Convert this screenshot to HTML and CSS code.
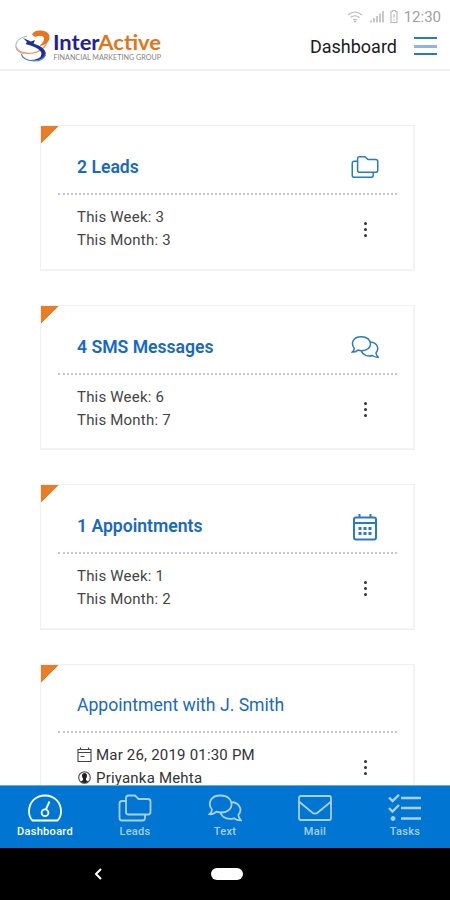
FILE: index.html
```
<!DOCTYPE html>
<html lang="en">
<head>
<meta charset="utf-8">
<title>Dashboard</title>
<link rel="stylesheet" href="styles.css">
</head>
<body>
<svg class="defs" aria-hidden="true">
  <symbol id="folders" viewBox="0 0 34 28">
    <path d="M8 7H4Q1.500 7 1.500 9.500V24Q1.500 26.500 4 26.500H24.500Q27 26.500 27 24V20.500M8 4Q8 1.500 10.500 1.500H17L20.500 5H30Q32.500 5 32.500 7.500V18Q32.500 20.500 30 20.500H10.500Q8 20.500 8 18Z"/>
  </symbol>
  <symbol id="chat" viewBox="0 0 34 28">
    <path d="M4 15.500C-.5 10 2 1.500 12.500 1.500C27 1.500 27.500 18.500 13 18.500Q10.500 18.500 8.500 17.700Q5 20.500 1.500 20.200Q4 18 4 15.500ZM23.500 8C31.500 8.500 35 16 30.300 21Q30.500 24 33 26.300Q29 26.500 26 24.300C20.500 26 14.500 24 12.500 19"/>
  </symbol>
</svg>
<div class="phone">
  <header class="top">
    <div class="status">
      <svg width="16" height="12" viewBox="0 0 16 12"><path d="M1 4Q8-2 15 4M3.500 6.500Q8 3 12.500 6.500M6 9Q8 7.500 10 9"/><circle cx="8" cy="10.500" r="1"/></svg>
      <svg class="signal" width="14" height="13" viewBox="0 0 14 13"><path d="M1 12.500v-2M4 12.500V8M7 12.500V6M10 12.500V3.500M13 12.500V1"/></svg>
      <svg class="battery" width="8" height="13" viewBox="0 0 8 13"><path d="M2.500 1.500V.5h3v1H7v11H1v-11ZM4 4v4M4 9.500v1"/></svg>
      <span class="clock">12:30</span>
    </div>
    <div class="bar">
      <svg class="logo" width="148" height="36" viewBox="0 0 148 36">
        <path d="M12 7C4 9 0 13 1 18Q2.500 23 9 24.500" stroke="#a8bfe0" stroke-width="1.200" fill="none"/>
        <path d="M1 18C3 25 18 27 27 20Q31 17 32 12" stroke="#ef9a6c" stroke-width="1.400" fill="none"/>
        <path d="M17 5.500Q19 1 26 1.500Q35 2 34.500 9Q34 15 24 17.500Q31 11 28.500 8Q26 5.500 20 8Z" fill="#e8741c"/>
        <path d="M8 9L16 12.500L20 11L18.500 14.500Q24 16.500 27 18.500Q34 24 28 29Q22 33 14 31Q26 31 26.500 25Q26 20 17 17L10.500 15L12 13Z" fill="#1d2f9c"/>
        <path d="M6.500 25Q7 31 19 32Q28 32 30.500 26" stroke="#4b83c4" stroke-width="1.200" fill="none"/>
        <text x="38" y="20.500" class="brand" textLength="108" lengthAdjust="spacingAndGlyphs"><tspan fill="#20209a">Inter</tspan><tspan fill="#e37417">Active</tspan></text>
        <text x="38.500" y="30.500" class="tagline" textLength="107.500" lengthAdjust="spacingAndGlyphs">FINANCIAL MARKETING GROUP</text>
      </svg>
      <h1>Dashboard</h1>
      <div class="menu"><i></i><i></i><i></i></div>
    </div>
  </header>

  <main>
    <section class="card">
      <div class="head"><h2>2 Leads</h2><svg class="ic" width="28" height="24"><use href="#folders"/></svg></div>
      <div class="body"><div><p>This Week: 3</p><p>This Month: 3</p></div><div class="dots"><i></i><i></i><i></i></div></div>
    </section>
    <section class="card">
      <div class="head"><h2>4 SMS Messages</h2><svg class="ic" width="28" height="24"><use href="#chat"/></svg></div>
      <div class="body"><div><p>This Week: 6</p><p>This Month: 7</p></div><div class="dots"><i></i><i></i><i></i></div></div>
    </section>
    <section class="card">
      <div class="head"><h2>1 Appointments</h2>
        <svg class="ic cal" width="28" height="28" viewBox="0 0 28 28"><path d="M5 4.500h18q2 0 2 2V24.500q0 2-2 2H5q-2 0-2-2V6.500q0-2 2-2ZM3 10h22M8.500 4.500V1M19.500 4.500V1"/><path class="cells" d="M7.500 15.500h3M12.500 15.500h3M17.500 15.500h3M7.500 20.500h3M12.500 20.500h3M17.500 20.500h3"/></svg>
      </div>
      <div class="body"><div><p>This Week: 1</p><p>This Month: 2</p></div><div class="dots"><i></i><i></i><i></i></div></div>
    </section>
    <section class="card event">
      <div class="head"><h2>Appointment with J. Smith</h2></div>
      <div class="body"><div>
        <p><svg width="15" height="16" viewBox="0 0 15 16"><path d="M1 2.500h13v12H1ZM1 5.500h13M3.500 2.500V.5M11.500 2.500V.5M3.500 9.500h4"/></svg><span>Mar 26, 2019 01:30 PM</span></p>
        <p><svg width="15" height="14" viewBox="0 0 15 14"><circle cx="7.500" cy="6.500" r="5.800"/><path class="person" d="M7.500 2Q10 2 10 4.700Q10 6.500 9 7.500V9L11 10.500Q9.500 12 7.500 12Q5.500 12 4 10.500L6 9V7.500Q5 6.500 5 4.700Q5 2 7.500 2Z"/></svg><span>Priyanka Mehta</span></p>
      </div><div class="dots"><i></i><i></i><i></i></div></div>
    </section>
  </main>

  <nav>
    <a class="active"><svg width="34" height="28" viewBox="0 0 34 28"><path d="M4.500 26.500Q1 23 1 17.500C1 8 8 1.500 17 1.500S33 8 33 17.500Q33 23 29.500 26.500ZM17.800 15.500L21.500 7.500"/><circle cx="17" cy="18.800" r="3.400"/></svg><span>Dashboard</span></a>
    <a><svg width="34" height="28"><use href="#folders"/></svg><span>Leads</span></a>
    <a><svg width="34" height="28"><use href="#chat"/></svg><span>Text</span></a>
    <a><svg width="34" height="28" viewBox="0 0 34 28"><path d="M3 2h28q2 0 2 2v20q0 2-2 2H3q-2 0-2-2V4q0-2 2-2ZM1.500 8L14.500 18.700Q17 20.500 19.500 18.700L32.500 8"/></svg><span>Mail</span></a>
    <a><svg class="tasks" width="34" height="28" viewBox="0 0 34 28"><path d="M1 3.500L4.500 7L11 .8M1 14L4.500 17.500L11 11M13 4h20M13 14h20M13 24.500h20"/><circle cx="5" cy="24.500" r="2"/></svg><span>Tasks</span></a>
  </nav>
  <footer>
    <svg class="back" width="10" height="14" viewBox="0 0 10 14"><path d="M8 2L3 7L8 12"/></svg>
    <div class="home"></div>
  </footer>
</div>
</body>
</html>
```
FILE: styles.css
```
* { box-sizing: border-box; margin: 0; padding: 0; }
body { background: #fff; font-family: Roboto, "Liberation Sans", sans-serif; }
svg { display: block; fill: none; flex: none; }
.defs { display: none; }
.phone { width: 450px; height: 900px; overflow: hidden; display: flex; flex-direction: column; }
.top { height: 71px; flex: none; border-bottom: 2px solid #f1f1f1; }
.status { height: 27px; padding: 6px 9px 0 0; display: flex; justify-content: flex-end; align-items: center; color: #a0a0a0; }
.status svg { stroke: #bcbcbc; stroke-width: 1.2; margin-right: 7px; }
.status .signal { stroke-width: 1.6; margin-right: 6px; }
.status .battery { margin-right: 6px; }
.status circle { fill: #b4b4b4; stroke: none; }
.clock { font-size: 15px; line-height: 20px; }
.bar { display: flex; align-items: flex-start; padding: 1px 13px 0 15px; }
.logo { margin-top: 1px; }
.brand { font: 700 20px Lato, sans-serif; }
.tagline { font: 400 7px Lato, sans-serif; fill: #858585; }
h1 { margin: 8px 0 0 auto; font-size: 18px; line-height: 22px; font-weight: 400; color: #1c1c1c; }
.menu { width: 23px; margin: 9px 0 0 17px; display: flex; flex-direction: column; gap: 6px; }
.menu i { height: 2px; background: #247bc9; }
.menu i:nth-child(2) { height: 3px; background: #8fb3e4; margin-bottom: -1px; }
main { flex: 1; min-height: 0; overflow: hidden; padding: 54px 35px 0 40px; display: flex; flex-direction: column; gap: 34px; }
.card { flex: none; height: 145.5px; border: 1px solid #f0f0f0; box-shadow: inset -1px -1px #f4f4f4; padding: 0 17px; background: linear-gradient(135deg, #e87d25 12.2px, transparent 12.8px) no-repeat; }
.head { height: 69px; padding: 15px 18px 0 19px; border-bottom: 2px dotted #c3c3e0; display: flex; align-items: center; justify-content: space-between; }
.event .head { height: 68px; padding-top: 14px; }
h2 { font-size: 17.6px; line-height: 22px; font-weight: 600; color: #1769c5; }
.event h2 { font-weight: 400; }
.ic { stroke: #2878cc; stroke-width: 1.8; }
.cal { stroke-width: 2; margin-top: 2px; }
.cal .cells { stroke-width: 3; }
.body { display: flex; justify-content: space-between; padding: 11px 30px 0 19px; }
p { font-size: 15px; line-height: 23px; letter-spacing: .2px; color: #444; display: flex; align-items: center; }
p svg { margin-right: 4px; stroke: #444; stroke-width: 1.1; }
.person { fill: #222; stroke: none; }
.event p { color: #333; }
.dots { display: flex; flex-direction: column; gap: 3px; padding-top: 16px; }
.dots i { width: 3px; height: 3px; border-radius: 50%; background: #333; }
nav { height: 63px; flex: none; background: #0076d2; border-top: 1px solid #68a9e3; display: grid; grid-template-columns: repeat(5, 1fr); }
nav a { display: flex; flex-direction: column; align-items: center; padding-top: 8px; color: #a9d0f4; font: 500 11px/13px Roboto, sans-serif; letter-spacing: .3px; }
nav svg { stroke: #a9cff3; stroke-width: 1.8; }
nav span { margin-top: 3px; }
nav .active { color: #fff; }
nav .active svg { stroke: #fff; }
.tasks { stroke-width: 2.4; }
.tasks circle { fill: #a9cff3; stroke-width: 1; }
footer { height: 52px; flex: none; background: #000; display: flex; align-items: center; padding: 0 0 0 93px; }
.back { stroke: #fff; stroke-width: 2; }
.home { width: 32px; height: 12px; border-radius: 6px; background: #fff; margin-left: 108px; }
```
